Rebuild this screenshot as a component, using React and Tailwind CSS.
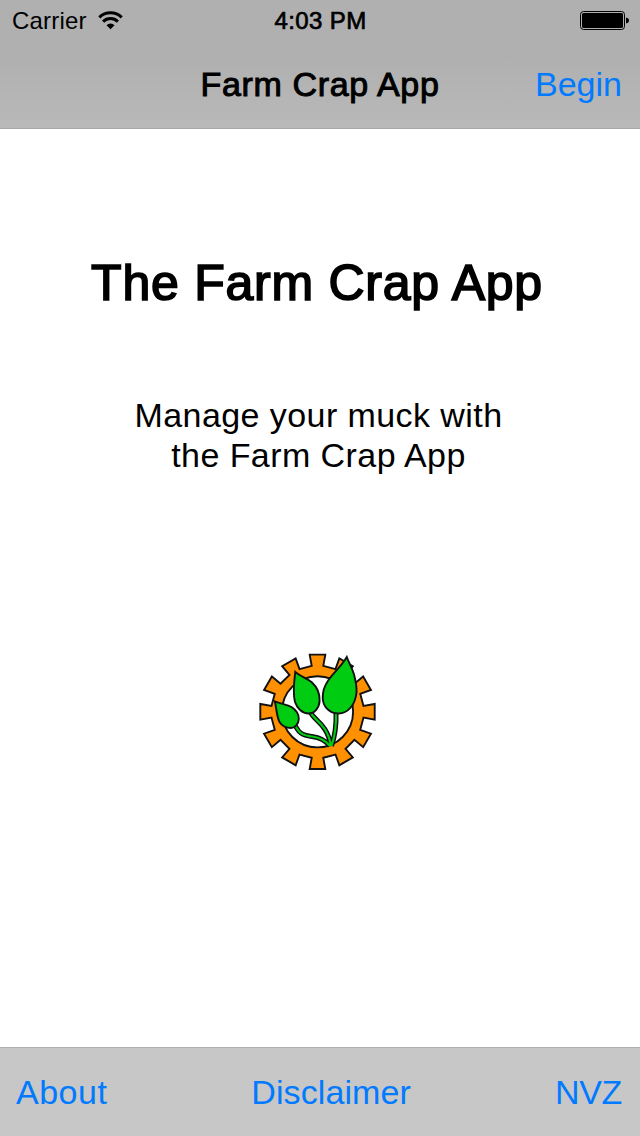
const tooth = [0, 30, 60, 90, 120, 150, 180, 210, 240, 270, 300, 330];
const gear = tooth
  .flatMap((deg) => {
    const a = (deg * Math.PI) / 180;
    return [[-5.8, -46], [-7.8, -57.2], [7.8, -57.2], [5.8, -46]].map(([x, y]) =>
      [67.5 + x * Math.cos(a) - y * Math.sin(a), 66.8 + x * Math.sin(a) + y * Math.cos(a)]
        .map((n) => n.toFixed(2))
        .join(","),
    );
  })
  .join(" ");

const stems =
  "M45.500 81C50 90 55 90.500 62 91.500C70 92.500 76 96 80 101M60.500 67C64 76 77 78 81 101M86 67C86.500 81 85 91 81.500 101";

function Logo() {
  return (
    <svg width="134" height="134" viewBox="0 0 134 134" stroke="#111" strokeWidth="1.9" strokeLinejoin="miter">
      <polygon points={gear} fill="#ff9100" />
      <circle cx="67.5" cy="66.8" r="35.6" fill="#fff" />
      <g fill="none">
        <path d={stems} strokeWidth="5" />
        <path d={stems} stroke="#00cc11" strokeWidth="2.1" />
      </g>
      <g fill="#00cc11">
        <path d="M24.800 56.300C31 59 37 59.500 41.500 62C46 65 49 69 48.800 74C48.600 79 45 83 41 83C36 83 32 81 29.500 77C26.500 71 26.500 63 24.800 56.300Z" />
        <path d="M45.300 26.800C49 30.500 56 33 61.500 37C67 42 70 49 69.600 56C69.200 63 64.500 68.500 58.700 68.500C52 68.500 47 63 45 57C42.500 47.500 44 37 45.300 26.800Z" />
        <path d="M96.800 12C99 18 102 23 103.900 29C105.500 35 107 42 106.500 48C105 60 98 68.500 88.500 68.500C79 68.500 73 61.500 72.700 53C72.500 46 75 40 78.500 35C83.500 28 91.500 21 96.800 12Z" />
      </g>
    </svg>
  );
}

export default function App() {
  return (
    <div className="flex h-[1136px] w-[640px] flex-col overflow-hidden bg-white font-['Liberation_Sans',Arial,sans-serif] text-black">
      <header className="h-[129px] shrink-0 border-b border-[#a7a7a7] bg-linear-to-b from-[#b0b0b0] from-45% to-[#b9b9b9]">
        <div className="grid h-[42px] grid-cols-3 items-center pr-[11px] pl-3 text-2xl">
          <div className="flex items-center gap-[11px]">
            <span className="leading-10 tracking-[0.2px]">Carrier</span>
            <svg width="25" height="20" viewBox="0 0 25 20" fill="none" stroke="#000" strokeWidth="3">
              <path d="M1.300 6.400a16 16 0 0 1 22.400 0M5.100 10.600a10.500 10.500 0 0 1 14.800 0" />
              <path d="M8.500 14.200a5.700 5.700 0 0 1 8 0L12.500 18.300Z" fill="#000" stroke="none" />
            </svg>
          </div>
          <span className="text-center leading-10 tracking-[0.4px] [-webkit-text-stroke:0.7px_#000]">
            4:03 PM
          </span>
          <svg className="justify-self-end" width="49" height="20" viewBox="0 0 49 20">
            <rect x=".5" y=".5" width="44" height="18" rx="3" fill="none" stroke="#000" />
            <rect x="2" y="2" width="41" height="15" rx="1.500" />
            <path d="M46 6.500c4 .5 4 5.500 0 6Z" />
          </svg>
        </div>
        <div className="grid h-[84px] grid-cols-[1fr_auto_1fr] items-center px-[18px] text-[34px] leading-[84px]">
          <span />
          <h1 className="tracking-[0.65px] [-webkit-text-stroke:1px_#000]">Farm Crap App</h1>
          <a className="justify-self-end text-[#007aff]">Begin</a>
        </div>
      </header>
      <main className="flex flex-1 flex-col items-center pr-[6px]">
        <h2 className="mt-[124px] text-[50px] leading-[60px] tracking-[0.75px] [-webkit-text-stroke:1.7px_#000]">
          The Farm Crap App
        </h2>
        <p className="mt-[82px] ml-[3px] text-center text-[34px] leading-10 tracking-[0.43px]">
          Manage your muck with
          <br />
          the Farm Crap App
        </p>
        <div className="mt-[170px]">
          <Logo />
        </div>
      </main>
      <footer className="flex h-[89px] shrink-0 items-center justify-between border-t border-[#aeaeae] bg-[#c7c7c7] pr-[18px] pl-4 text-[34px] leading-[88px] text-[#007aff]">
        <a className="tracking-[0.5px]">About</a>
        <a className="tracking-[0.1px]">Disclaimer</a>
        <a className="tracking-[-0.3px]">NVZ</a>
      </footer>
    </div>
  );
}
